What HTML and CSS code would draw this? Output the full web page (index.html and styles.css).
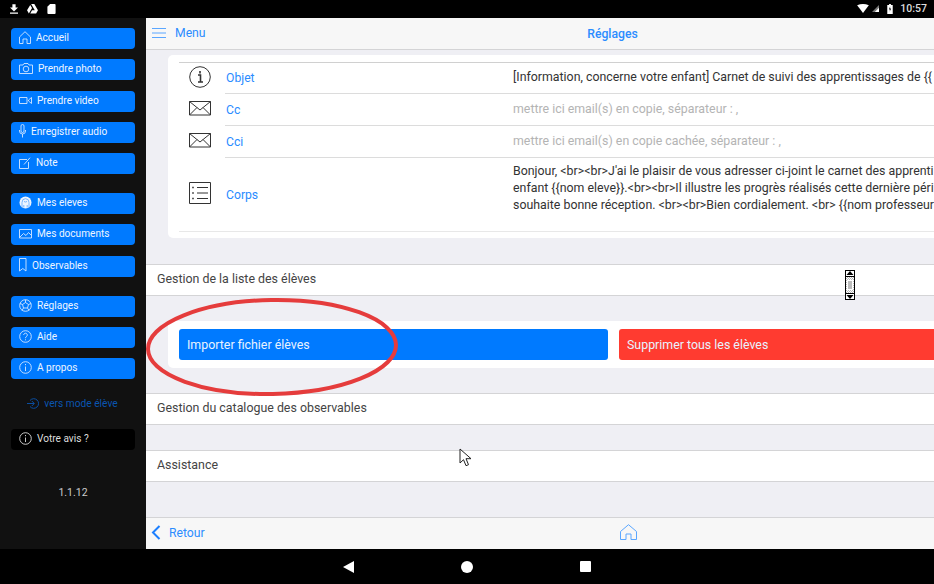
FILE: index.html
```html
<!DOCTYPE html>
<html lang="fr">
<head>
    <meta charset="UTF-8">
    <meta name="viewport" content="width=device-width, initial-scale=1.0">
    <title>Réglages</title>
    <link rel="stylesheet" href="styles.css">
</head>
<body>
    <div class="statusbar">
        <div class="status-left">
            <svg width="8" height="10" viewBox="0 0 10 12"><path d="M3 0h4v4h3L5 9 0 4h3zM0 10.500h10V12H0z" fill="#fff"/></svg>
            <svg width="11" height="10" viewBox="0 0 12 11"><path d="M4 0h4l4 7H8.500L4.500 0zM3.500 1l2 3.500L2 10.500 0 7zM3.500 10.500l2-3.500H12l-2 3.500z" fill="#fff"/></svg>
            <svg width="9" height="10" viewBox="0 0 9 11"><path d="M3 0h5a1 1 0 0 1 1 1v9a1 1 0 0 1-1 1H1a1 1 0 0 1-1-1V3z" fill="#fff"/></svg>
        </div>
        <div class="status-right">
            <svg width="12" height="9" viewBox="0 0 13 10"><path d="M0 1.500Q6.500-1.500 13 1.500L6.500 10z" fill="#fff"/></svg>
            <svg width="7" height="9" viewBox="0 0 10 10"><path d="M10 0v10H0z" fill="#777"/><path d="M10 4v6H4z" fill="#fff"/></svg>
            <svg class="battery" width="6" height="10" viewBox="0 0 6 11"><path d="M2 0h2v1h2v10H0V1h2z" fill="#fff"/><path d="M3.300 2.500L1.800 6h1.200l-.4 2.500L4.300 5H3z" fill="#000"/></svg>
            <span class="clock">10:57</span>
        </div>
    </div>

    <div class="app">
        <nav class="sidebar">
            <div class="side-group">
                <a class="side-btn">
                    <svg width="12" height="13" viewBox="0 0 12 13"><path d="M.5 6L6 .7 11.500 6v6.500H8V8H4v4.500H.5z"/></svg>
                    Accueil
                </a>
                <a class="side-btn">
                    <svg width="14" height="11" viewBox="0 0 14 11"><path d="M.5 2h3.500l1-1.500h4L10 2h3.500v8.500H.5z"/><circle cx="7" cy="6" r="2.800"/></svg>
                    Prendre photo
                </a>
                <a class="side-btn">
                    <svg width="13" height="9" viewBox="0 0 13 9"><path d="M.5 1.500h7.500v6H.5zM9.500 4l3-2.500v6l-3-2.500z"/></svg>
                    Prendre video
                </a>
                <a class="side-btn">
                    <svg width="7" height="14" viewBox="0 0 7 14"><rect x="2" y=".5" width="3" height="8" rx="1.500"/><path d="M.5 6v1a3 3 0 0 0 6 0V6M3.500 10v3.500"/></svg>
                    Enregistrer audio
                </a>
                <a class="side-btn">
                    <svg width="12" height="12" viewBox="0 0 12 12"><path d="M8 2.500H.5v9h9V5M5 7.500L11 .7"/></svg>
                    Note
                </a>
            </div>
            <div class="side-group">
                <a class="side-btn">
                    <svg width="13" height="13" viewBox="0 0 13 13"><circle class="solid" cx="6.500" cy="6.500" r="6"/><path class="cut" d="M3 11.500V6.500a3.500 3.800 0 0 1 7 0v5M4.800 11.500V9M8.200 11.500V9M5 5.500q1.500 1 3 0"/></svg>
                    Mes eleves
                </a>
                <a class="side-btn">
                    <svg width="13" height="10" viewBox="0 0 13 10"><path d="M.5.500h12v8.500H.5zM1 8l3.500-3.500 2.500 2 2.500-3 3 3"/></svg>
                    Mes documents
                </a>
                <a class="side-btn">
                    <svg width="8" height="14" viewBox="0 0 8 14"><path d="M.5.500h6.500v12.500L3.800 10.500.5 13z"/></svg>
                    Observables
                </a>
            </div>
            <div class="side-group">
                <a class="side-btn">
                    <svg width="13" height="13" viewBox="0 0 13 13"><circle cx="6.500" cy="6.500" r="5.800"/><path d="M6.500 3.500l3 2-1 3.500h-4l-1-3.500zM6.500 3.500V.8M9.500 5.500l2.500-1M8.500 9l1.500 2.500M4.500 9L3 11.500M3.500 5.500L1 4.500"/></svg>
                    Réglages
                </a>
                <a class="side-btn">
                    <svg width="13" height="13" viewBox="0 0 13 13"><circle cx="6.500" cy="6.500" r="5.800"/><path d="M4.700 5a1.800 1.800 0 1 1 2.800 1.500c-.7.500-1 .8-1 1.700M6.500 9.300v1"/></svg>
                    Aide
                </a>
                <a class="side-btn">
                    <svg width="13" height="13" viewBox="0 0 13 13"><circle cx="6.500" cy="6.500" r="5.800"/><path d="M6.500 3v1.200M6.500 5.500v4.500"/></svg>
                    A propos
                </a>
            </div>
            <a class="student-mode">
                <svg width="12" height="11" viewBox="0 0 12 11"><path d="M0 5.500h7M4.800 3l2.500 2.500L4.800 8M3 2.500a4.800 4.800 0 1 1 0 6"/></svg>
                vers mode élève
            </a>
            <a class="side-btn feedback">
                <svg width="13" height="13" viewBox="0 0 13 13"><circle cx="6.500" cy="6.500" r="5.800"/><path d="M6.500 3v1.200M6.500 5.500v4.500"/></svg>
                Votre avis ?
            </a>
            <div class="version">1.1.12</div>
        </nav>

        <main class="main">
            <header class="topbar">
                <div class="menu-link">
                    <svg class="burger" width="14" height="10" viewBox="0 0 14 10"><path d="M0 .5h14M0 5h14M0 9.500h14"/></svg>
                    Menu
                </div>
                <div class="title">Réglages</div>
            </header>

            <div class="content">
                <section class="card mail-card">
                    <div class="mail-row">
                        <svg class="mail-icon" width="22" height="22" viewBox="0 0 22 22"><circle cx="11" cy="11" r="10.300"/><path class="bold" d="M9 9h2.500v6.500M9 16h5M11 5v2.400"/></svg>
                        <span class="mail-label">Objet</span>
                        <span class="mail-value">[Information, concerne votre enfant] Carnet de suivi des apprentissages de {{</span>
                    </div>
                    <div class="mail-row">
                        <svg class="mail-icon" width="22" height="15" viewBox="0 0 22 15"><path d="M.5.500h21v13.500H.5zM.5.500L11 9 21.500.5M.5 14l7.500-7.500M21.500 14L14 6.500"/></svg>
                        <span class="mail-label">Cc</span>
                        <span class="mail-value hint">mettre ici email(s) en copie, séparateur : ,</span>
                    </div>
                    <div class="mail-row">
                        <svg class="mail-icon" width="22" height="15" viewBox="0 0 22 15"><path d="M.5.500h21v13.500H.5zM.5.500L11 9 21.500.5M.5 14l7.500-7.500M21.500 14L14 6.500"/></svg>
                        <span class="mail-label">Cci</span>
                        <span class="mail-value hint">mettre ici email(s) en copie cachée, séparateur : ,</span>
                    </div>
                    <div class="mail-row body-row">
                        <svg class="mail-icon" width="22" height="22" viewBox="0 0 22 22"><path d="M.5.500h21v21H.5zM8 5.500h11M8 11h11M8 16.500h11"/><path class="bold" d="M4 4.700v1.600M4 10.200v1.600M4 15.700v1.600"/></svg>
                        <span class="mail-label">Corps</span>
                        <span class="mail-value">Bonjour, &lt;br&gt;&lt;br&gt;J'ai le plaisir de vous adresser ci-joint le carnet des apprenti<br>enfant {{nom eleve}}.&lt;br&gt;&lt;br&gt;Il illustre les progrès réalisés cette dernière péri<br>souhaite bonne réception. &lt;br&gt;&lt;br&gt;Bien cordialement. &lt;br&gt; {{nom professeur</span>
                    </div>
                </section>

                <div class="section-row">Gestion de la liste des élèves</div>

                <section class="card action-card">
                    <button class="action primary">Importer fichier élèves</button>
                    <button class="action danger">Supprimer tous les élèves</button>
                </section>

                <div class="section-row">Gestion du catalogue des observables</div>
                <div class="section-row">Assistance</div>
            </div>

            <footer class="bottombar">
                <div class="back-link">
                    <svg class="chevron" width="10" height="15" viewBox="0 0 10 15"><path d="M8.500 1L2 7.500 8.500 14"/></svg>
                    Retour
                </div>
                <svg class="home-link" width="17" height="16" viewBox="0 0 17 16"><path d="M.5 7.500L8.500.7l8 6.800V15.500h-5.500V10H6v5.500H.5z"/></svg>
            </footer>
        </main>
    </div>

    <div class="navbar">
        <svg width="11" height="12" viewBox="0 0 11 12"><path d="M11 0v12L0 6z" fill="#fff"/></svg>
        <svg width="12" height="12" viewBox="0 0 12 12"><circle cx="6" cy="6" r="6" fill="#fff"/></svg>
        <svg width="11" height="11" viewBox="0 0 11 11"><rect width="11" height="11" rx="1" fill="#fff"/></svg>
    </div>

    <!-- annotation drawn over the capture -->
    <svg class="red-circle" width="256" height="104" viewBox="0 0 256 104"><ellipse cx="127" cy="50" rx="124" ry="47" transform="rotate(-1 127 50)"/></svg>

    <div class="scroll-widget">
        <svg class="scroll-arrow" width="8" height="5" viewBox="0 0 8 5"><path d="M4 0l3.500 4H.5z"/></svg>
        <div class="scroll-track"><div class="scroll-thumb"></div></div>
        <svg class="scroll-arrow" width="8" height="5" viewBox="0 0 8 5"><path d="M4 5L.5 1h7z"/></svg>
    </div>

    <svg class="cursor" width="13" height="20" viewBox="0 0 13 20"><path d="M1 1v14l3.500-3.300 2.500 6 2.500-1-2.500-6H12z" fill="#fff" stroke="#222" stroke-width="1"/></svg>
</body>
</html>
```

FILE: styles.css
```css
* {
    box-sizing: border-box;
}
body {
    margin: 0;
    width: 934px;
    height: 584px;
    overflow: hidden;
    position: relative;
    display: flex;
    flex-direction: column;
    font-family: Roboto, "Liberation Sans", sans-serif;
    background-color: #000;
}

/* android bars */
.statusbar {
    height: 18px;
    flex: none;
    display: flex;
    justify-content: space-between;
    align-items: center;
    padding: 0 7px 1px 10px;
    background-color: #000;
}
.status-left,
.status-right {
    display: flex;
    align-items: center;
}
.status-left {
    gap: 9px;
}
.status-right {
    gap: 3px;
}
.battery {
    margin-left: 5px;
}
.clock {
    margin-left: 4px;
    color: #ddd;
    font-size: 10.500px;
    font-weight: 500;
}
.navbar {
    height: 35px;
    flex: none;
    display: flex;
    align-items: center;
    justify-content: center;
    gap: 107px;
    background-color: #000;
}

.app {
    flex: 1;
    display: flex;
    min-height: 0;
    overflow: hidden;
}

/* left menu */
.sidebar {
    width: 146px;
    flex: none;
    padding: 10px 11px 0;
    background-color: #111;
}
.side-group {
    display: flex;
    flex-direction: column;
    gap: 10.250px;
    margin-bottom: 19px;
}
.side-btn {
    height: 21px;
    display: flex;
    align-items: center;
    gap: 5px;
    padding: 0 0 2px 8px;
    border-radius: 4px;
    background-color: #007aff;
    color: #eef5ff;
    font-size: 10.100px;
}
.side-btn svg,
.student-mode svg {
    flex: none;
    fill: none;
    stroke: #d6e8ff;
    stroke-width: 0.900;
}
.side-btn svg .solid {
    fill: #eef5ff;
    stroke: none;
}
.side-btn svg .cut {
    stroke: #5aa6ff;
    stroke-width: 0.800;
}
.student-mode {
    display: flex;
    align-items: center;
    justify-content: center;
    gap: 5px;
    margin-top: -5px;
    height: 20px;
    padding-right: 1px;
    color: #0a55b0;
    font-size: 10.200px;
}
.student-mode svg {
    stroke: #0a55b0;
}
.feedback {
    margin-top: 16px;
    background-color: #000;
    color: #ddd;
}
.feedback svg {
    stroke: #ddd;
}
.version {
    margin-top: 36px;
    text-align: center;
    color: #ccc;
    font-size: 10.500px;
}

/* main panel, wider than the window: its right part is cut by the screen */
.main {
    width: 934px;
    flex: none;
    display: flex;
    flex-direction: column;
    background-color: #efeff4;
}
.topbar {
    height: 32px;
    flex: none;
    position: relative;
    display: flex;
    align-items: center;
    justify-content: center;
    border-bottom: 1px solid #d4d4d6;
    background-color: #f7f7f7;
}
.menu-link {
    position: absolute;
    left: 6px;
    top: 8px;
    display: flex;
    align-items: center;
    gap: 9px;
    color: #2b8cff;
    font-size: 12.200px;
}
.burger {
    fill: none;
    stroke: #5aa6ff;
}
.title {
    margin-right: 1px;
    color: #2b8cff;
    font-size: 12.200px;
    font-weight: 500;
}
.content {
    flex: 1;
    min-height: 0;
    padding-top: 5px;
    overflow: hidden;
}
.card {
    margin-left: 22px;
    background-color: #fff;
    border-radius: 5px 0 0 5px;
}
.mail-card {
    height: 183px;
    padding: 7px 0 0 11px;
    margin-bottom: 26px;
}
.mail-row {
    height: 32px;
    display: flex;
    align-items: center;
    position: relative;
    white-space: nowrap;
    color: #333;
}
.mail-row:first-child {
    border-top: 1px solid #d0d0d0;
}
.mail-row:first-child .mail-label {
    margin-bottom: 2px;
}
.mail-row:not(.body-row)::after {
    content: "";
    position: absolute;
    left: 46px;
    right: 0;
    bottom: 0;
    height: 1px;
    background-color: #dcdcdc;
}
.body-row {
    height: 74px;
    border-bottom: 1px solid #e8e8e8;
}
.mail-icon {
    flex: none;
    margin-left: 10px;
    margin-bottom: 3px;
    fill: none;
    stroke: #333;
    stroke-width: 1;
}
.mail-icon .bold {
    stroke-width: 1.600;
}
.mail-label {
    width: 287px;
    flex: none;
    margin-left: 15px;
    color: #2b8cff;
    font-size: 12.200px;
}
.mail-value {
    line-height: 17px;
    margin-bottom: 2px;
    font-size: 12.360px;
}
.body-row .mail-value {
    margin-bottom: 13px;
}
.hint {
    color: #b4b4b4;
}
.section-row {
    height: 32px;
    display: flex;
    align-items: center;
    padding: 0 0 3px 11px;
    margin-bottom: 25px;
    border-top: 1px solid #d4d4d6;
    border-bottom: 1px solid #d4d4d6;
    background-color: #fff;
    color: #444;
    font-size: 12.400px;
}
.action-card {
    height: 47px;
    display: flex;
    gap: 11px;
    padding: 8px 11px 7px;
    margin-bottom: 25px;
}
.action {
    width: 429px;
    height: 31px;
    flex: none;
    border: none;
    border-radius: 3px;
    padding: 0 0 0 8px;
    text-align: left;
    color: #e8f2ff;
    font-family: inherit;
    font-size: 12.400px;
}
.primary {
    background-color: #007aff;
}
.danger {
    background-color: #ff3b30;
}
.bottombar {
    height: 32px;
    flex: none;
    position: relative;
    display: flex;
    align-items: center;
    justify-content: center;
    border-top: 1px solid #d4d4d6;
    background-color: #f7f7f7;
}
.back-link {
    position: absolute;
    left: 5px;
    top: 7px;
    display: flex;
    align-items: center;
    gap: 8px;
    color: #2b8cff;
    font-size: 12.200px;
}
.chevron {
    fill: none;
    stroke: #1c7fff;
    stroke-width: 2;
}
.home-link {
    fill: none;
    stroke: #5aa6ff;
    stroke-width: 1;
    margin: 0 0 4px 30px;
}

/* things lying over the page */
.red-circle {
    position: absolute;
    left: 145px;
    top: 297px;
    fill: none;
    stroke: #e53c3c;
    stroke-width: 4;
}
.scroll-widget {
    position: absolute;
    left: 845px;
    top: 270px;
    width: 10px;
    height: 30px;
    display: flex;
    flex-direction: column;
    align-items: center;
    border: 1px solid #000;
    background-color: #fff;
}
.scroll-arrow {
    flex: none;
    fill: #000;
}
.scroll-track {
    flex: 1;
    width: 100%;
    padding: 3px 1px;
    border-top: 1px solid #000;
    border-bottom: 1px solid #000;
    background: repeating-conic-gradient(#bbb 0 25%, #fff 0 50%) 0 0 / 2px 2px;
}
.scroll-thumb {
    height: 100%;
    border: 1px solid #fff;
    background-color: #bdbdbd;
}
.cursor {
    position: absolute;
    left: 459px;
    top: 448px;
}
```
